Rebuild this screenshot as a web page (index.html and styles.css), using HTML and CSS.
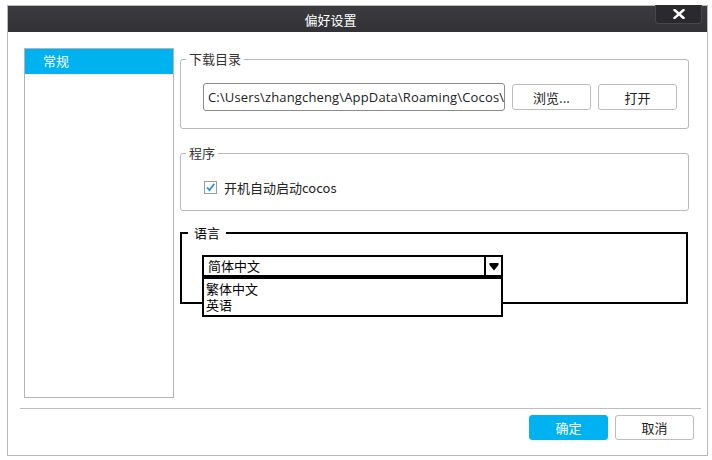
FILE: index.html
```html
<!DOCTYPE html>
<html lang="zh">
<head>
<meta charset="utf-8">
<title>偏好设置</title>
<link rel="stylesheet" href="styles.css">
</head>
<body>
<div class="window">
  <div class="titlebar">
    <span class="title">偏好设置</span>
    <button class="close"><svg width="12" height="10" viewBox="0 0 12 10"><path d="M1.5 1 L10.5 9 M10.5 1 L1.5 9" stroke="#fff" stroke-width="2.4" stroke-linecap="square"/></svg></button>
  </div>
  <div class="content">
    <ul class="sidebar">
      <li class="item selected">常规</li>
    </ul>
    <div class="main">
      <fieldset class="group">
        <legend>下载目录</legend>
        <div class="row">
          <div class="path">C:\Users\zhangcheng\AppData\Roaming\Cocos\</div>
          <button class="btn">浏览...</button>
          <button class="btn">打开</button>
        </div>
      </fieldset>
      <fieldset class="group group2">
        <legend>程序</legend>
        <label class="check">
          <span class="box"><svg width="11" height="11" viewBox="0 0 11 11"><path d="M2 5.5 L4.5 8.2 L9.2 1.8" fill="none" stroke="#2a8fd8" stroke-width="1.8"/></svg></span>
          <span>开机自动启动cocos</span>
        </label>
      </fieldset>
      <fieldset class="sketch">
        <legend>语言</legend>
        <div class="combo">
          <div class="combo-value">简体中文</div>
          <div class="combo-arrow"><svg width="10" height="9" viewBox="0 0 10 9"><path d="M0.5 1 L9.5 1 L9.5 3 L5 8.5 L0.5 3 Z" fill="#000"/></svg></div>
          <ul class="dropdown">
            <li>繁体中文</li>
            <li>英语</li>
          </ul>
        </div>
      </fieldset>
    </div>
  </div>
  <div class="separator"></div>
  <div class="footer">
    <button class="btn primary">确定</button>
    <button class="btn">取消</button>
  </div>
</div>
</body>
</html>
```

FILE: styles.css
```css
* { box-sizing: border-box; }
html, body { margin: 0; padding: 0; background: #fff; }
body {
  font-family: "Open Sans", "Noto Sans CJK SC", sans-serif;
  font-size: 13px;
  color: #333;
}
.window {
  margin: 5px 0 0 7px;
  width: 701px;
  height: 451px;
  border: 1px solid #b9b9b9;
  background: #fff;
  display: flex;
  flex-direction: column;
}
.titlebar {
  height: 26px;
  background: linear-gradient(#3b3b40, #323236);
  display: flex;
  align-items: center;
  justify-content: center;
  position: relative;
}
.title {
  color: #fff;
  font-family: "Noto Sans CJK SC", sans-serif;
  font-size: 13px;
  margin-left: -54px;
}
.close {
  position: absolute;
  right: 5px;
  top: -1px;
  width: 47px;
  height: 19px;
  background: #2a2a2e;
  border: 1px solid #46464b;
  border-top: none;
  border-radius: 0 0 4px 4px;
  padding: 0;
  display: flex;
  align-items: center;
  justify-content: center;
}
.content {
  display: flex;
  padding: 16px 0 0 16px;
  gap: 6px;
}
.sidebar {
  list-style: none;
  margin: 0;
  padding: 0;
  width: 150px;
  height: 350px;
  border: 1px solid #b4b4b4;
}
.item {
  height: 25px;
  line-height: 24px;
  padding-left: 18px;
  font-family: "Noto Sans CJK SC", sans-serif;
}
.item.selected { background: #00b3f0; color: #fff; }
.main {
  width: 509px;
  display: flex;
  flex-direction: column;
  padding-top: 3px;
}
.group {
  margin: 0;
  border: 1px solid #b9b9b9;
  border-radius: 3px;
  padding: 0;
  height: 78px;
}
.group legend {
  margin-left: 5px;
  padding: 0 3px 0 3px;
  font-family: "Noto Sans CJK SC", sans-serif;
  line-height: 16px;
  color: #333;
}
.row {
  display: flex;
  align-items: center;
  gap: 7px;
  margin: 16px 0 0 22px;
}
.path {
  width: 302px;
  height: 28px;
  border: 1px solid #8c8c8c;
  border-radius: 3px;
  padding: 0 0 0 4px;
  line-height: 26px;
  white-space: nowrap;
  overflow: hidden;
  color: #222;
  letter-spacing: 0.15px;
}
.btn {
  width: 79px;
  height: 26px;
  border: 1px solid #bdbdbd;
  border-radius: 3px;
  background: #fff;
  font-family: "Noto Sans CJK SC", sans-serif;
  font-size: 13px;
  color: #222;
  padding: 0;
}
.btn.primary {
  background: #00b3f0;
  border-color: #00b3f0;
  color: #fff;
}
.group2 {
  margin-top: 16px;
  height: 66px;
}
.check {
  display: flex;
  align-items: center;
  gap: 7px;
  margin: 17px 0 0 22px;
  font-family: "Noto Sans CJK SC", "Open Sans", sans-serif;
  color: #222;
}
.box {
  width: 13px;
  height: 13px;
  border: 1px solid #9a9a9a;
  display: flex;
  align-items: center;
  justify-content: center;
  margin-left: 1px;
}
.sketch {
  margin: 14px 0 0 0;
  width: 508px;
  border: 2px solid #000;
  padding: 14px 0 23px 0;
  height: 79px;
}
.sketch legend {
  margin-left: 6px;
  padding: 0 6px;
  font-family: "Noto Sans CJK SC", sans-serif;
  line-height: 16px;
  color: #000;
}
.combo {
  position: relative;
  width: 301px;
  height: 22px;
  margin-left: 20px;
  border: 2px solid #000;
  display: flex;
  font-family: "Noto Sans CJK SC", sans-serif;
  color: #000;
}
.combo-value {
  flex: 1;
  line-height: 18px;
  padding-left: 4px;
}
.combo-arrow {
  width: 17px;
  border-left: 2px solid #000;
  display: flex;
  align-items: center;
  justify-content: center;
}
.dropdown {
  position: absolute;
  left: -2px;
  top: 20px;
  width: 301px;
  margin: 0;
  padding: 2px 0 0 2px;
  list-style: none;
  border: 2px solid #000;
  background: #fff;
  height: 40px;
}
.dropdown li {
  line-height: 16px;
  height: 16px;
}
.separator {
  margin: 10px 6px 0 12px;
  height: 1px;
  background: #bdbdbd;
}
.footer {
  display: flex;
  justify-content: flex-end;
  gap: 7px;
  padding: 6px 13px 0 0;
}
.footer .btn { height: 25px; }
```
